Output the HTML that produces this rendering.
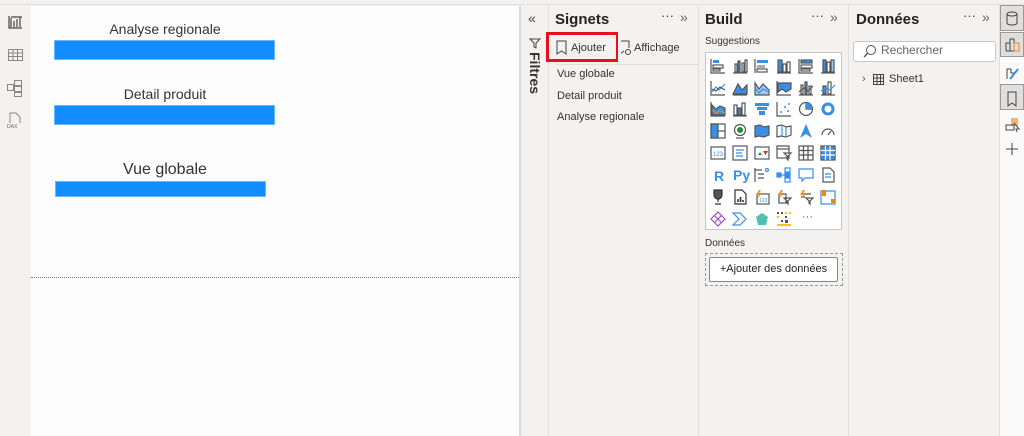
<!DOCTYPE html>
<html><head><meta charset="utf-8"><style>
*{margin:0;padding:0;box-sizing:border-box}
body{width:1024px;height:436px;overflow:hidden;background:#f3f2f1;font-family:"Segoe UI","Liberation Sans",sans-serif;color:#252423;position:relative}
.a{position:absolute}
.t{font-size:11px;color:#333}
</style></head><body>
<!-- top ribbon remnant -->
<div class="a" style="left:0;top:0;width:1024px;height:5px;background:#f3f2f1;border-bottom:1px solid #e1dfdd"></div>
<!-- left nav -->
<div class="a" style="left:0;top:5px;width:31px;height:431px;background:#f3f2f1"></div>
<svg class="a" style="left:0;top:5px" width="31" height="130">
<g fill="none" stroke="#444" stroke-width="1.2"><path d="M9 11v12h13M11 22V13M14 22v-6M17 22v-8M20 22v-10M11 12h11"/></g>
<g fill="none" stroke="#888" stroke-width="1"><rect x="8.5" y="44.5" width="14" height="11"/><path d="M8.5 48h14M8.5 51.5h14M13 44.5v11M17.5 44.5v11"/></g>
<g fill="none" stroke="#888" stroke-width="1"><rect x="7.5" y="79.5" width="6" height="6"/><rect x="14.5" y="75.5" width="7" height="5"/><rect x="14.5" y="81.5" width="7" height="5"/><rect x="14.5" y="87.5" width="7" height="4"/></g>
<g fill="none" stroke="#888" stroke-width="1"><path d="M10 118v-10h6l4 4v6"/></g>
<text x="7" y="123" font-size="5" fill="#666" font-family="Liberation Sans">DAX</text>
</svg>
<!-- canvas -->
<div class="a" style="left:31px;top:6px;width:488px;height:430px;background:#fdfdfd"></div>
<div class="a" style="left:519px;top:6px;width:2px;height:430px;background:#dcdcdc"></div>
<div class="a" style="left:31px;top:277px;width:488px;border-top:1px dotted #777"></div>
<div class="a" style="left:54px;top:21px;width:222px;text-align:center;font-size:14px;color:#333">Analyse regionale</div>
<div class="a" style="left:54px;top:40px;width:221px;height:20px;background:#118dff;border:1px solid #6cb6ff"></div>
<div class="a" style="left:54px;top:86px;width:222px;text-align:center;font-size:14px;color:#333">Detail produit</div>
<div class="a" style="left:54px;top:105px;width:221px;height:20px;background:#118dff;border:1px solid #6cb6ff"></div>
<div class="a" style="left:56px;top:161px;width:220px;font-size:16px;color:#333;padding-left:67px;font-family:'Liberation Sans',sans-serif">Vue globale</div>
<div class="a" style="left:55px;top:181px;width:211px;height:16px;background:#118dff;border:1px solid #6cb6ff"></div>
<!-- filters strip -->
<div class="a" style="left:521px;top:6px;width:27px;height:430px;background:#f3f2f1"></div>
<div class="a" style="left:528px;top:10px;font-size:14px;color:#444">«</div>
<svg class="a" style="left:528px;top:37px" width="14" height="12"><path d="M2 2h10L8 6v5L6 10V6z" fill="none" stroke="#444"/></svg>
<div class="a" style="left:527px;top:52px;font-size:14px;font-weight:bold;writing-mode:vertical-rl;color:#333">Filtres</div>
<!-- Signets pane -->
<div class="a" style="left:548px;top:6px;width:150px;height:430px;background:#f3f2f1;border-left:1px solid #e1dfdd"></div>
<div class="a" style="left:555px;top:11px;font-size:15px;font-weight:600">Signets</div>
<div class="a" style="left:661px;top:8px;font-size:13px;color:#444">···</div>
<div class="a" style="left:680px;top:9px;font-size:14px;color:#666">»</div>
<svg class="a" style="left:555px;top:40px" width="14" height="16"><path d="M2 1h9v13l-4.5-3L2 14z" fill="none" stroke="#444"/></svg>
<div class="a t" style="left:571px;top:42px;font-size:11px">Ajouter</div>
<svg class="a" style="left:618px;top:40px" width="14" height="16"><path d="M2 1h9v7M2 1v13l4-3" fill="none" stroke="#444"/><circle cx="10" cy="12" r="2.5" fill="none" stroke="#444"/></svg>
<div class="a t" style="left:634px;top:42px;font-size:11px">Affichage</div>
<div class="a" style="left:546px;top:32px;width:72px;height:30px;border:3px solid #e8101a;border-right-width:2px"></div>
<div class="a" style="left:618px;top:38px;width:3px;height:17px;background:#f3f2f1"></div>
<div class="a" style="left:556px;top:64px;width:142px;border-top:1px solid #e1dfdd"></div>
<div class="a t" style="left:557px;top:68px">Vue globale</div>
<div class="a t" style="left:557px;top:90px">Detail produit</div>
<div class="a t" style="left:557px;top:111px">Analyse regionale</div>
<!-- Build pane -->
<div class="a" style="left:698px;top:6px;width:150px;height:430px;background:#f3f2f1;border-left:1px solid #e1dfdd"></div>
<div class="a" style="left:705px;top:11px;font-size:15px;font-weight:600">Build</div>
<div class="a" style="left:811px;top:8px;font-size:13px;color:#444">···</div>
<div class="a" style="left:830px;top:9px;font-size:14px;color:#666">»</div>
<div class="a t" style="left:705px;top:36px;font-size:10px">Suggestions</div>
<div class="a" style="left:705px;top:52px;width:137px;height:178px;background:#fff;border:1px solid #c8c6c4"></div>
<svg class="a" style="left:705px;top:52px" width="137" height="178">
<g stroke-width="1.2" fill="none">
<!-- row1 y 6-21 -->
<g transform="translate(5,6)" stroke="#555"><path d="M1 1v14h14"/><rect x="3" y="2" width="6" height="3" fill="#3a8ee6" stroke="none"/><rect x="3" y="7" width="10" height="3"/><rect x="3" y="11" width="7" height="2"/></g>
<g transform="translate(27,6)" stroke="#555"><path d="M1 15h14"/><rect x="3" y="6" width="2" height="8"/><rect x="6" y="3" width="2" height="11" fill="#3a8ee6"/><rect x="10" y="5" width="2" height="9"/><rect x="13" y="2" width="2" height="12"/></g>
<g transform="translate(49,6)" stroke="#555"><path d="M1 1v14"/><rect x="3" y="2" width="11" height="3" fill="#3a8ee6" stroke="none"/><rect x="3" y="7" width="8" height="3" fill="#aaa" stroke="none"/><rect x="3" y="11" width="10" height="3"/></g>
<g transform="translate(71,6)" stroke="#555"><path d="M1 15h14"/><rect x="2" y="2" width="4" height="12" fill="#3a8ee6"/><rect x="7" y="6" width="3" height="8"/><rect x="11" y="4" width="3" height="10"/></g>
<g transform="translate(93,6)" stroke="#555"><path d="M1 1v14h14"/><rect x="3" y="2" width="11" height="3" fill="#3a8ee6"/><rect x="3" y="7" width="11" height="3"/><rect x="3" y="11" width="9" height="2"/></g>
<g transform="translate(115,6)" stroke="#555"><path d="M1 15h14"/><rect x="3" y="2" width="3" height="12" fill="#3a8ee6"/><rect x="7" y="4" width="3" height="10"/><rect x="11" y="2" width="3" height="12" fill="#9cc8f3"/></g>
<!-- row2 y 28 -->
<g transform="translate(5,28)" stroke="#555"><path d="M1 1v14h14"/><path d="M2 12l4-5 3 3 6-6" stroke="#3a8ee6"/><path d="M2 9l4 2 4-4 5 3"/></g>
<g transform="translate(27,28)" stroke="#555"><path d="M1 15h14"/><path d="M1 14l5-10 4 6 5-5v9z" fill="#3a8ee6" stroke="#555"/></g>
<g transform="translate(49,28)" stroke="#555"><path d="M1 3l4 6 4-5 6 6v5H1z" fill="#9cc8f3"/><path d="M1 8l4 5 4-4 6 3" stroke="#3a8ee6"/></g>
<g transform="translate(71,28)" stroke="#555"><path d="M1 1v14h14"/><path d="M2 3h13v6l-5 3-4-3-4 3z" fill="#3a8ee6"/></g>
<g transform="translate(93,28)" stroke="#555"><path d="M1 15h14"/><rect x="3" y="5" width="2" height="9"/><rect x="7" y="2" width="2" height="12" fill="#3a8ee6"/><rect x="11" y="6" width="2" height="8"/><path d="M1 12l5-4 4 3 5-5"/></g>
<g transform="translate(115,28)" stroke="#555"><path d="M1 15h14"/><rect x="3" y="6" width="3" height="8" fill="#3a8ee6"/><rect x="8" y="2" width="3" height="12"/><path d="M1 11l5-3 4 2 5-5" stroke="#3a8ee6"/></g>
<!-- row3 y 49 -->
<g transform="translate(5,49)" stroke="#555"><path d="M1 1v14h14"/><path d="M2 4l4 4 4-3 5 2v7H2z" fill="#3a8ee6"/><path d="M2 9l4 3 4-2 5 2" stroke="#e8891a"/></g>
<g transform="translate(27,49)" stroke="#555"><path d="M1 15h14"/><rect x="2" y="4" width="3" height="10"/><rect x="6" y="7" width="3" height="7" fill="#3a8ee6"/><rect x="10" y="2" width="3" height="12"/></g>
<g transform="translate(49,49)" stroke="none"><rect x="1" y="2" width="14" height="3" fill="#3a8ee6"/><rect x="3" y="6" width="10" height="3" fill="#3a8ee6"/><rect x="5" y="10" width="6" height="4" fill="#3a8ee6"/></g>
<g transform="translate(71,49)" stroke="#555"><path d="M1 1v14h14"/><g fill="#3a8ee6" stroke="none"><circle cx="5" cy="11" r="1"/><circle cx="9" cy="6" r="1"/><circle cx="12" cy="10" r="1"/><circle cx="13" cy="3" r="1"/></g></g>
<g transform="translate(93,49)" stroke="#555"><circle cx="8" cy="8" r="6.5"/><path d="M8 1.5V8h6.5" /><path d="M8 1.5A6.5 6.5 0 0 1 14.5 8H8z" fill="#3a8ee6" stroke="none"/></g>
<g transform="translate(115,49)" stroke="#3a8ee6" stroke-width="3"><circle cx="8" cy="8" r="5"/></g>
<!-- row4 y 71 -->
<g transform="translate(5,71)" stroke="#555"><rect x="1" y="1" width="14" height="14"/><rect x="1" y="1" width="7" height="14" fill="#3a8ee6"/><path d="M8 8h7"/></g>
<g transform="translate(27,71)" stroke="#555"><circle cx="8" cy="7" r="5.5"/><circle cx="8" cy="7" r="3" fill="#2a8a3a" stroke="none"/><path d="M4 15h8"/></g>
<g transform="translate(49,71)" stroke="#555"><path d="M1 3l5-1 4 2 5-1v9l-5 2-5-1-4 1z" fill="#3a8ee6"/></g>
<g transform="translate(71,71)" stroke="#555"><path d="M1 3l5-1 4 2 5-1v9l-5 2-5-1-4 1z"/><path d="M6 2v11M10 4v10" stroke="#3a8ee6"/></g>
<g transform="translate(93,71)" stroke="none"><path d="M8 1l6 14-6-4-6 4z" fill="#3a8ee6"/></g>
<g transform="translate(115,71)" stroke="#555"><path d="M2 12a6 6 0 0 1 12 0"/><path d="M8 12l3-4"/></g>
<!-- row5 y 93 -->
<g transform="translate(5,93)" stroke="#555"><rect x="1" y="2" width="14" height="12"/><text x="3" y="11" font-size="6" fill="#3a8ee6" stroke="none" font-family="Liberation Sans">123</text></g>
<g transform="translate(27,93)" stroke="#555"><rect x="1" y="1" width="14" height="14"/><path d="M4 5h8M4 8h6M4 11h7" stroke="#3a8ee6"/></g>
<g transform="translate(49,93)" stroke="#555"><rect x="1" y="2" width="14" height="12"/><path d="M4 10l2-3 2 3z" fill="#2a8a3a" stroke="none"/><path d="M9 6h5l-2.5 4z" fill="#d9303a" stroke="none"/></g>
<g transform="translate(71,93)" stroke="#555"><rect x="1" y="1" width="12" height="12"/><path d="M1 4h12"/><path d="M8 8h7l-3 3v4l-1-1v-3z" fill="#fff"/></g>
<g transform="translate(93,93)" stroke="#555"><rect x="1" y="1" width="14" height="14"/><path d="M1 5.5h14M1 10h14M5.5 1v14M10 1v14"/></g>
<g transform="translate(115,93)" stroke="#555"><rect x="1" y="1" width="14" height="14" fill="#3a8ee6"/><path d="M1 5.5h14M1 10h14M5.5 1v14M10 1v14" stroke="#fff"/></g>
<!-- row6 y 115 -->
<text x="9" y="129" font-size="14" font-weight="bold" fill="#3a8ee6" stroke="none" font-family="Liberation Sans">R</text>
<text x="28" y="128" font-size="14" font-weight="bold" fill="#3a8ee6" stroke="none" font-family="Liberation Sans">Py</text>
<g transform="translate(49,115)" stroke="#555"><path d="M1 1v14M1 3h7M4 7h6M4 11h6"/><circle cx="13" cy="3" r="1.5" stroke="#3a8ee6"/></g>
<g transform="translate(71,115)" stroke="#3a8ee6"><rect x="1" y="6" width="4" height="4" fill="#3a8ee6"/><rect x="9" y="1" width="5" height="4"/><rect x="9" y="6" width="5" height="4" fill="#3a8ee6"/><rect x="9" y="11" width="5" height="4"/><path d="M5 8h4"/></g>
<g transform="translate(93,115)" stroke="#3a8ee6"><path d="M1 2h14v9H7l-3 3v-3H1z"/></g>
<g transform="translate(115,115)" stroke="#555"><path d="M3 1h7l4 4v10H3z"/><path d="M5 7h6M5 10h6" stroke="#3a8ee6"/></g>
<!-- row7 y 137 -->
<g transform="translate(5,137)" stroke="#333"><path d="M4 1h8v5a4 4 0 0 1-8 0z" fill="#555"/><path d="M8 10v3M5 15h6"/></g>
<g transform="translate(27,137)" stroke="#333"><path d="M3 1h7l4 4v10H3z"/><path d="M6 13v-3M8.5 13v-5M11 13v-2" stroke="#333" stroke-width="1.6"/></g>
<g transform="translate(49,137)" stroke="#555"><rect x="3" y="5" width="12" height="10"/><path d="M5 1l-3 5h3l-2 4 5-6H5l2-3z" fill="#e8891a" stroke="none"/><text x="5" y="13" font-size="5" fill="#3a8ee6" stroke="none" font-family="Liberation Sans">123</text></g>
<g transform="translate(71,137)" stroke="#555"><rect x="3" y="5" width="7" height="9"/><path d="M8 9h7l-3 3v3l-1-1v-2z"/><path d="M5 1l-3 5h3l-2 4 5-6H5l2-3z" fill="#e8891a" stroke="none"/></g>
<g transform="translate(93,137)" stroke="#555"><path d="M3 5h10M3 8h4"/><path d="M8 9h7l-3 3v3l-1-1v-2z"/><path d="M5 1l-3 5h3l-2 4 5-6H5l2-3z" fill="#e8891a" stroke="none"/></g>
<g transform="translate(115,137)" stroke="#3a8ee6"><rect x="1" y="2" width="14" height="13"/><rect x="2" y="1" width="4" height="6" fill="#e8891a" stroke="none"/><rect x="11" y="10" width="4" height="4" fill="#e8891a" stroke="none"/></g>
<!-- row8 y 159 -->
<g transform="translate(5,159)" stroke="#a24ec1"><path d="M8 1l7 7-7 7-7-7z"/><path d="M4.5 4.5l7 7M11.5 4.5l-7 7"/></g>
<g transform="translate(27,159)" stroke="#3a8ee6"><path d="M1 2h7l6 6-6 6H1l6-6z"/></g>
<g transform="translate(49,159)" stroke="none"><path d="M8 2l6 4-2 8H4L2 6z" fill="#4fc1b3"/></g>
<g transform="translate(71,159)" stroke="none"><g fill="#555"><rect x="1" y="1" width="2" height="2"/><rect x="5" y="1" width="2" height="2"/><rect x="9" y="5" width="2" height="2"/><rect x="5" y="9" width="2" height="2"/><rect x="9" y="9" width="3" height="3"/></g><g fill="#f2c811"><rect x="9" y="1" width="2" height="2"/><rect x="13" y="1" width="2" height="2"/><rect x="1" y="5" width="2" height="2"/><rect x="1" y="13" width="14" height="2"/></g></g>
<text x="97" y="168" font-size="11" fill="#555" stroke="none">···</text>
</g>
</svg>
<div class="a t" style="left:705px;top:238px;font-size:10px">Données</div>
<div class="a" style="left:705px;top:253px;width:138px;height:33px;border:1px dashed #999"></div>
<div class="a" style="left:709px;top:257px;width:129px;height:25px;background:#fff;border:1px solid #8a8886;border-radius:2px;text-align:center;line-height:23px;font-size:11px">+Ajouter des données</div>
<!-- Données pane -->
<div class="a" style="left:848px;top:6px;width:151px;height:430px;background:#f3f2f1;border-left:1px solid #e1dfdd"></div>
<div class="a" style="left:856px;top:11px;font-size:15px;font-weight:600">Données</div>
<div class="a" style="left:963px;top:8px;font-size:13px;color:#444">···</div>
<div class="a" style="left:982px;top:9px;font-size:14px;color:#666">»</div>
<div class="a" style="left:853px;top:41px;width:143px;height:21px;background:#fff;border:1px solid #c8c6c4;border-radius:3px"></div>
<svg class="a" style="left:863px;top:44px" width="14" height="14"><circle cx="8" cy="6" r="4.5" fill="none" stroke="#555"/><path d="M5 9l-4 4" stroke="#555" stroke-width="1.3"/></svg>
<div class="a" style="left:881px;top:43px;font-size:12px;color:#666">Rechercher</div>
<div class="a" style="left:862px;top:73px;font-size:11px;color:#555">›</div>
<svg class="a" style="left:873px;top:74px" width="11" height="11"><rect x="0.5" y="0.5" width="10" height="10" fill="none" stroke="#444"/><path d="M0.5 4h10M0.5 7.5h10M4 0.5v10M7.5 0.5v10" stroke="#444"/></svg>
<div class="a t" style="left:889px;top:73px;font-size:11px">Sheet1</div>
<!-- right bar -->
<div class="a" style="left:999px;top:6px;width:25px;height:430px;background:#fafafa;border-left:1px solid #e1dfdd"></div>
<div class="a" style="left:1000px;top:5px;width:24px;height:26px;background:#e1dfdd;border:1px solid #999"></div>
<div class="a" style="left:1000px;top:32px;width:24px;height:25px;background:#e1dfdd;border:1px solid #999"></div>
<div class="a" style="left:1000px;top:84px;width:24px;height:26px;background:#e1dfdd;border:1px solid #999"></div>
<svg class="a" style="left:1000px;top:5px" width="24" height="160">
<g fill="none" stroke="#444" stroke-width="1"><ellipse cx="12" cy="9" rx="5" ry="2"/><path d="M7 9v9a5 2 0 0 0 10 0V9"/></g>
<g fill="none" stroke="#444"><path d="M6 46V38h4v8M10 46V34h4v12H6"/><rect x="14" y="38" width="5" height="8" stroke="#e8891a"/></g>
<g fill="none" stroke="#444"><path d="M7 74V64h4v4h4"/><path d="M18 64l-8 10" stroke="#3a8ee6" stroke-width="2"/></g>
<path d="M8 87h8v14l-4-3-4 3z" fill="none" stroke="#444"/>
<rect x="11" y="113" width="7" height="8" fill="#f7b46a"/><path d="M6 120h8v5H6z" fill="none" stroke="#444"/><path d="M14 118l5 6-3 0 1 3" fill="#fff" stroke="#444"/>
<path d="M12 138v12M6 144h12" stroke="#444"/>
</svg>
</body></html>
